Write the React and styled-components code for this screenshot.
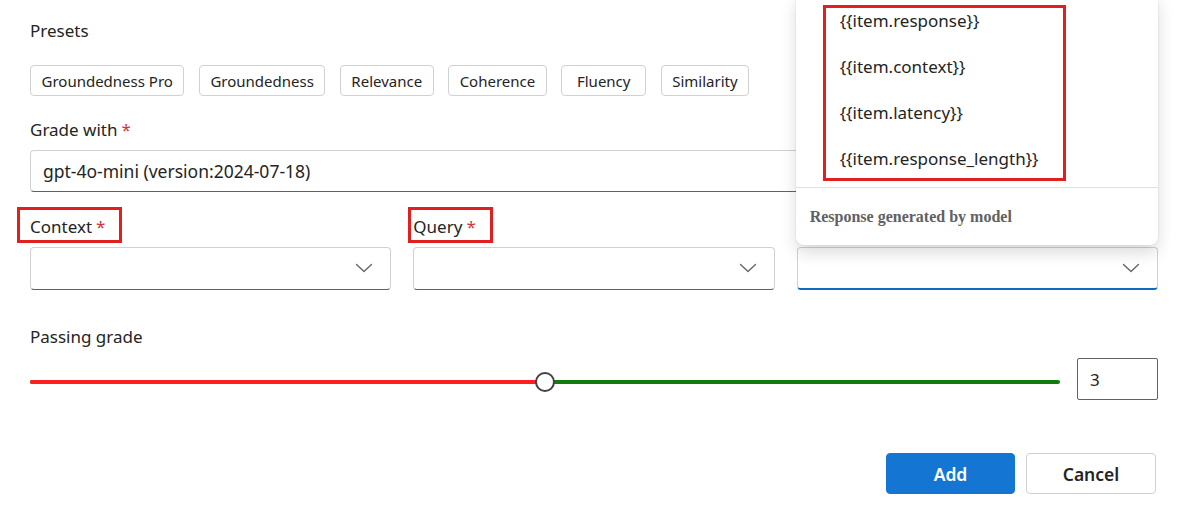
import styled, { createGlobalStyle } from "styled-components"

const GlobalStyle = createGlobalStyle`
  html, body {
    margin: 0;
    padding: 0;
    background: #ffffff;
  }
  body {
    font-family: "Noto Sans", "Segoe UI", sans-serif;
    color: #242424;
    overflow: hidden;
  }
`

const Page = styled.div`
  width: 1128px;
  padding: 20px 27px 0 30px;
  display: flex;
  flex-direction: column;
`

const Label = styled.div`
  position: relative;
  display: inline-flex;
  align-self: flex-start;
  align-items: center;
  font-size: 17px;
  line-height: 22px;
  color: #242424;
  margin-top: ${(p) => p.$top || 0}px;
`

const Required = styled.span`
  color: #d13438;
  margin-left: 4px;
`

const Mark = styled.span`
  position: absolute;
  top: -9px;
  bottom: -5px;
  left: ${(p) => p.$left}px;
  right: ${(p) => p.$right}px;
  border: 3px solid #e21f1f;
  pointer-events: none;
`

const Chips = styled.div`
  display: flex;
  gap: 14.5px;
  margin-top: 23px;
`

const Chip = styled.button`
  height: 31px;
  min-width: 85px;
  padding: 0 10.5px;
  border: 1px solid #d1d1d1;
  border-radius: 4px;
  background: #ffffff;
  font-family: inherit;
  font-size: 15px;
  line-height: 20px;
  color: #242424;
`

const TextField = styled.div`
  margin-top: 9px;
  height: 42px;
  box-sizing: border-box;
  border: 1px solid #d1d1d1;
  border-bottom-color: #616161;
  border-radius: 4px;
  display: flex;
  align-items: center;
  padding: 0 12px;
  font-size: 17.5px;
`

const Columns = styled.div`
  display: grid;
  grid-template-columns: repeat(3, 1fr);
  column-gap: 22px;
  margin-top: 24px;
`

const Field = styled.div`
  position: relative;
  display: flex;
  flex-direction: column;
`

const Select = styled.div`
  margin-top: 9px;
  height: 43px;
  box-sizing: border-box;
  border: 1px solid #d1d1d1;
  border-bottom: ${(p) => (p.$open ? "2px solid #0f6cbd" : "1px solid #616161")};
  border-radius: 4px;
  display: flex;
  align-items: center;
  justify-content: flex-end;
  padding: 0 16px ${(p) => (p.$open ? 0 : 1)}px 0;
  background: #ffffff;
`

const Popup = styled.div`
  position: absolute;
  left: -1px;
  right: 0;
  bottom: 45px;
  background: #ffffff;
  border-radius: 8px;
  box-shadow: 0 0 2px rgba(0, 0, 0, 0.12), 0 8px 16px rgba(0, 0, 0, 0.14);
  display: flex;
  flex-direction: column;
`

const Options = styled.div`
  position: relative;
  padding: 4px 0 6px;
`

const Option = styled.div`
  height: 46px;
  display: flex;
  align-items: center;
  padding-left: 44px;
  font-size: 17px;
  color: #242424;
`

const OptionsMark = styled.span`
  position: absolute;
  left: 27px;
  width: 243px;
  top: 12px;
  height: 176px;
  box-sizing: border-box;
  border: 3px solid #e21f1f;
`

const PopupFooter = styled.div`
  border-top: 1px solid #e0e0e0;
  height: 57px;
  display: flex;
  align-items: center;
  padding-left: 14px;
  font-family: "Liberation Serif", serif;
  font-weight: bold;
  font-size: 16px;
  color: #616161;
`

const SliderRow = styled.div`
  display: flex;
  align-items: center;
  gap: 17px;
  margin-top: 10px;
`

const Track = styled.div`
  position: relative;
  flex: 1;
  height: 4px;
  margin-top: 6px;
  border-radius: 2px;
  background: #107c10;
`

const TrackFill = styled.div`
  height: 100%;
  border-radius: 2px;
  background: #ff1f1f;
`

const Thumb = styled.div`
  position: absolute;
  top: 50%;
  width: 20px;
  height: 20px;
  box-sizing: border-box;
  border-radius: 50%;
  border: 2px solid #424242;
  background: #ffffff;
  transform: translate(-50%, -50%);
`

const NumberBox = styled.div`
  width: 81px;
  height: 42px;
  box-sizing: border-box;
  border: 1px solid #616161;
  border-radius: 2px;
  display: flex;
  align-items: center;
  padding-left: 12px;
  font-size: 17px;
`

const Actions = styled.div`
  display: flex;
  justify-content: flex-end;
  gap: 11px;
  margin-top: 53px;
  padding-right: 2px;
`

const Button = styled.button`
  width: ${(p) => (p.$primary ? 129 : 130)}px;
  height: 41px;
  border-radius: 4px;
  border: 1px solid ${(p) => (p.$primary ? "#1476d2" : "#d1d1d1")};
  background: ${(p) => (p.$primary ? "#1476d2" : "#ffffff")};
  color: ${(p) => (p.$primary ? "#ffffff" : "#242424")};
  font-family: inherit;
  font-size: 17.5px;
  font-weight: 600;
`

function Chevron() {
  return (
    <svg width="20" height="20" viewBox="0 0 20 20" fill="none">
      <path d="M2.5 6.5 L10 13.5 L17.5 6.5" stroke="#616161" strokeWidth="1.3" strokeLinecap="round" strokeLinejoin="round" />
    </svg>
  )
}

const presets = ["Groundedness Pro", "Groundedness", "Relevance", "Coherence", "Fluency", "Similarity"]
const fields = ["{{item.response}}", "{{item.context}}", "{{item.latency}}", "{{item.response_length}}"]

export default function App() {
  const min = 1
  const max = 5
  const value = 3
  const pct = ((value - min) / (max - min)) * 100

  return (
    <>
      <GlobalStyle />
      <Page>
        <Label>Presets</Label>
        <Chips>
          {presets.map((p) => (
            <Chip key={p}>{p}</Chip>
          ))}
        </Chips>

        <Label $top={23}>
          Grade with<Required>*</Required>
        </Label>
        <TextField>gpt-4o-mini (version:2024-07-18)</TextField>

        <Columns>
          <Field>
            <Label>
              Context<Required>*</Required>
              <Mark $left={-13} $right={-17} />
            </Label>
            <Select>
              <Chevron />
            </Select>
          </Field>
          <Field>
            <Label>
              Query<Required>*</Required>
              <Mark $left={-5} $right={-17} />
            </Label>
            <Select>
              <Chevron />
            </Select>
          </Field>
          <Field>
            <Label>&nbsp;</Label>
            <Select $open>
              <Chevron />
            </Select>
            <Popup>
              <Options>
                {fields.map((f) => (
                  <Option key={f}>{f}</Option>
                ))}
                <OptionsMark />
              </Options>
              <PopupFooter>Response generated by model</PopupFooter>
            </Popup>
          </Field>
        </Columns>

        <Label $top={36}>Passing grade</Label>
        <SliderRow>
          <Track>
            <TrackFill style={{ width: `${pct}%` }} />
            <Thumb style={{ left: `${pct}%` }} />
          </Track>
          <NumberBox>{value}</NumberBox>
        </SliderRow>

        <Actions>
          <Button $primary>Add</Button>
          <Button>Cancel</Button>
        </Actions>
      </Page>
    </>
  )
}
